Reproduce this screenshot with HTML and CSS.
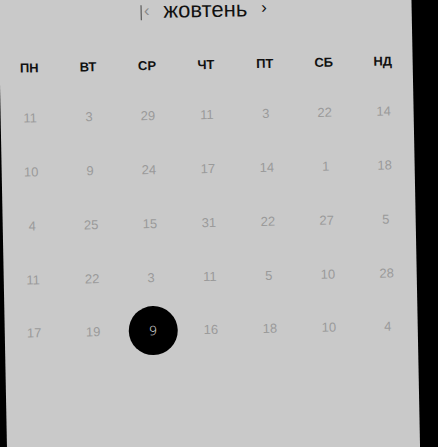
FILE: index.html
```html
<!DOCTYPE html>
<html lang="uk">
<head>
<meta charset="utf-8">
<title>Календар</title>
<link rel="stylesheet" href="styles.css">
</head>
<body>
<div class="panel">
  <div class="title-row">
    <span class="nav nav-prev"><span class="bar"></span><span class="chev">&lsaquo;</span></span>
    <span class="month">жовтень</span>
    <span class="nav nav-next">&rsaquo;</span>
  </div>
  <div class="weekdays">
    <span>ПН</span><span>ВТ</span><span>СР</span><span>ЧТ</span><span>ПТ</span><span>СБ</span><span>НД</span>
  </div>
  <div class="days">
    <span>11</span><span>3</span><span>29</span><span>11</span><span>3</span><span>22</span><span>14</span>
    <span>10</span><span>9</span><span>24</span><span>17</span><span>14</span><span>1</span><span>18</span>
    <span>4</span><span>25</span><span>15</span><span>31</span><span>22</span><span>27</span><span>5</span>
    <span>11</span><span>22</span><span>3</span><span>11</span><span>5</span><span>10</span><span>28</span>
    <span>17</span><span>19</span><span class="selected"><b>9</b></span><span>16</span><span>18</span><span>10</span><span>4</span>
  </div>
</div>
</body>
</html>
```
FILE: styles.css
```css
html, body {
  margin: 0;
  padding: 0;
  background: #000;
  overflow: hidden;
  width: 438px;
  height: 447px;
}
.panel {
  width: 412.5px;
  height: 540px;
  margin: -20px 0 0 -2px;
  background: #c9c9c9;
  transform-origin: 0 0;
  transform: rotate(-1.1deg);
  padding-top: 23px;
  box-sizing: border-box;
  font-family: "Liberation Sans", Arial, sans-serif;
}
.title-row {
  height: 24px;
  display: flex;
  justify-content: center;
  align-items: center;
  gap: 14px;
}
.month {
  font-size: 22px;
  color: #111;
  line-height: 24px;
  padding-bottom: 2px;
}
.nav {
  display: flex;
  align-items: center;
  font-size: 17px;
  line-height: 24px;
}
.nav-prev {
  color: #8a8a8a;
  gap: 2px;
  margin-left: -2px;
}
.bar {
  width: 1px;
  height: 15px;
  background: #444;
}
.chev {
  margin-top: -2px;
}
.nav-next {
  color: #111;
  margin-top: -5px;
}
.weekdays {
  margin-top: 31px;
  height: 20px;
  display: grid;
  grid-template-columns: repeat(7, 1fr);
  align-items: center;
  justify-items: center;
  font-size: 13px;
  font-weight: bold;
  color: #111;
}
.days {
  margin-top: 14px;
  display: grid;
  grid-template-columns: repeat(7, 1fr);
  grid-auto-rows: 53.75px;
  align-items: center;
  justify-items: center;
  font-size: 13px;
  color: #9a9a9a;
}
.selected {
  width: 49px;
  height: 49px;
  border-radius: 50%;
  background: #000;
  display: flex;
  align-items: center;
  justify-content: center;
  margin-left: 2px;
}
.selected b {
  font-family: "Open Sans", sans-serif;
  font-weight: 300;
  font-size: 13px;
  color: #e2e2e2;
  margin-top: -2px;
}
```
